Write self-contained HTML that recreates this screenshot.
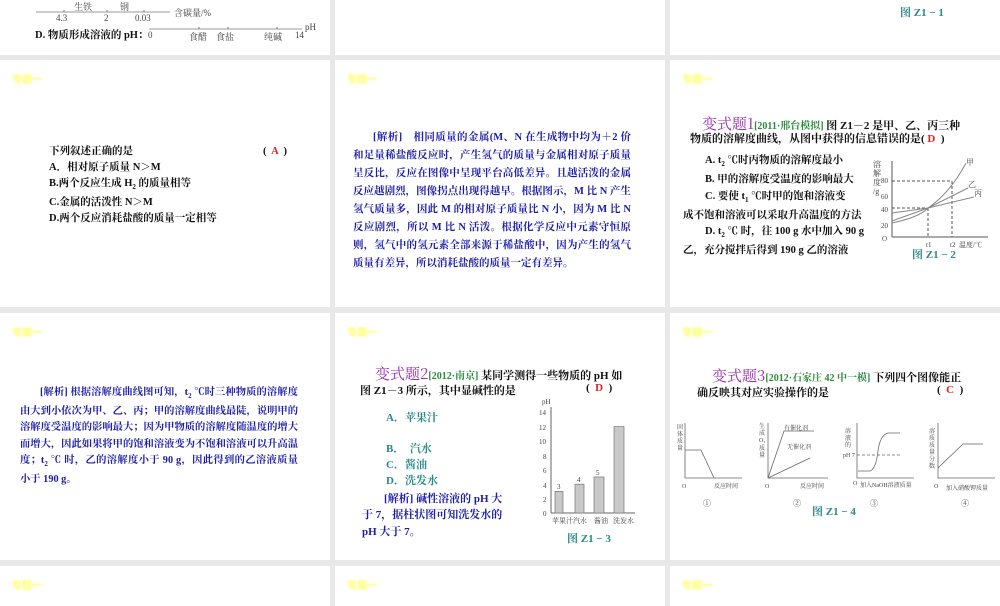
<!DOCTYPE html>
<html><head><meta charset="utf-8"><style>
*{margin:0;padding:0;box-sizing:border-box}
body{width:1000px;height:600px;background:#e8e8e8;position:relative;overflow:hidden;font-family:"Liberation Serif","Noto Serif CJK SC","Noto Sans CJK SC",serif;font-size:11px;color:#111}
.s{position:absolute;background:#fff;overflow:hidden}
.t{position:absolute;white-space:nowrap}
.zt{position:absolute;left:12px;top:11px;color:#ffff99;font-size:10px;font-weight:bold;font-family:"Noto Sans CJK SC",sans-serif;text-shadow:0 0 2px #ffff80}
.b{color:#1c1ca8;font-weight:bold}
.g{color:#2a8a3a;font-weight:bold;font-size:10px}
.p{color:#9a2ab0;font-size:15px;font-family:"Noto Serif CJK SC",serif}
.tl{color:#2a8a8a;font-weight:bold;font-size:11px}
.r{color:#d22;font-weight:bold}
.bk{font-weight:bold}
svg{position:absolute}
svg text{font-family:"Liberation Serif","Noto Serif CJK SC",serif}
</style></head><body>

<div class="s" style="left:0;top:0;width:330px;height:55px">
<svg width="330" height="55" style="left:0;top:0">
<line x1="36" y1="12" x2="170" y2="12" stroke="#777" stroke-width="0.8"/>
<line x1="64" y1="10" x2="64" y2="12" stroke="#777"/><line x1="107" y1="10" x2="107" y2="12" stroke="#777"/><line x1="144" y1="10" x2="144" y2="12" stroke="#777"/>
<text x="74" y="10" font-size="9" fill="#444">生铁</text><text x="120" y="10" font-size="9" fill="#444">钢</text>
<text x="56" y="21" font-size="9" fill="#444">4.3</text><text x="104" y="21" font-size="9" fill="#444">2</text><text x="135" y="21" font-size="9" fill="#444">0.03</text>
<text x="174" y="16" font-size="9" fill="#444">含碳量/%</text>
<line x1="149" y1="29" x2="302" y2="29" stroke="#777" stroke-width="0.8"/>
<line x1="199" y1="27" x2="199" y2="29" stroke="#777"/><line x1="228" y1="27" x2="228" y2="29" stroke="#777"/><line x1="277" y1="27" x2="277" y2="29" stroke="#777"/>
<text x="148" y="38" font-size="9" fill="#444">0</text><text x="189" y="40" font-size="9" fill="#444">食醋</text><text x="216" y="40" font-size="9" fill="#444">食盐</text><text x="264" y="40" font-size="9" fill="#444">纯碱</text><text x="295" y="38" font-size="9" fill="#444">14</text><text x="305" y="30" font-size="9" fill="#444">pH</text>
</svg>
<div class="t bk" style="left:35px;top:27px;font-size:10.5px">D. 物质形成溶液的 pH：</div>
</div>
<div class="s" style="left:335px;top:0;width:330px;height:55px"></div>
<div class="s" style="left:670px;top:0;width:330px;height:55px"><div class="t tl" style="left:230px;top:4px">图 Z1 − 1</div></div>

<div class="s" style="left:0;top:60px;width:330px;height:247px">
<div class="zt">专题一</div>
<div class="bk" style="position:absolute;left:49px;top:84px;line-height:16px;font-size:10.5px;width:260px">
<div style="position:relative">下列叙述正确的是<span style="position:absolute;left:214px;top:0">(&nbsp; <span class="r">A</span> &nbsp;)</span></div>
<div>A．相对原子质量 N＞M</div>
<div>B.两个反应生成 H<sub style="font-size:7px">2</sub> 的质量相等</div>
<div>C.金属的活泼性 N＞M</div>
<div>D.两个反应消耗盐酸的质量一定相等</div>
</div>
</div>
<div class="s" style="left:335px;top:60px;width:330px;height:247px">
<div class="zt">专题一</div>
<div class="b" style="position:absolute;left:18px;top:69px;width:278px;line-height:18px;text-align:justify;font-size:10.5px">
<div style="text-indent:20px">[解析]　相同质量的金属(M、N 在生成物中均为＋2 价和足量稀盐酸反应时，产生氢气的质量与金属相对原子质量呈反比，反应在图像中呈现平台高低差异。且越活泼的金属反应越剧烈，图像拐点出现得越早。根据图示，M 比 N 产生氢气质量多，因此 M 的相对原子质量比 N 小，因为 M 比 N 反应剧烈，所以 M 比 N 活泼。根据化学反应中元素守恒原则，氢气中的氢元素全部来源于稀盐酸中，因为产生的氢气质量有差异，所以消耗盐酸的质量一定有差异。</div>
</div>
</div>
<div class="s" style="left:670px;top:60px;width:330px;height:247px">
<div class="zt">专题一</div>
<div class="t" style="left:32px;top:53px"><span class="p">变式题1</span><span class="g">[2011·邢台模拟]</span><span class="bk"> 图 Z1－2 是甲、乙、丙三种</span></div>
<div class="t bk" style="left:20px;top:70px">物质的溶解度曲线，从图中获得的信息错误的是(&nbsp;<span class="r">D</span>&nbsp; )</div>
<div class="bk" style="position:absolute;left:13px;top:93px;line-height:16.2px;font-size:10.5px">
<div style="padding-left:22px">A. t<sub style="font-size:7px">2</sub> ℃时丙物质的溶解度最小</div>
<div style="padding-left:22px">B. 甲的溶解度受温度的影响最大</div>
<div style="padding-left:22px">C. 要使 t<sub style="font-size:7px">1</sub> ℃时甲的饱和溶液变</div>
<div>成不饱和溶液可以采取升高温度的方法</div>
<div style="padding-left:22px">D. t<sub style="font-size:7px">2</sub> ℃ 时，往 100 g 水中加入 90 g</div>
<div>乙，充分搅拌后得到 190 g 乙的溶液</div>
</div>
<svg width="120" height="110" style="left:200px;top:95px">
<line x1="22" y1="6" x2="22" y2="82" stroke="#555"/><line x1="22" y1="82" x2="118" y2="82" stroke="#555"/>
<text x="3" y="12" font-size="8" fill="#444">溶</text><text x="3" y="21" font-size="8" fill="#444">解</text><text x="3" y="30" font-size="8" fill="#444">度</text><text x="3" y="39" font-size="8" fill="#444">/g</text>
<text x="11" y="28" font-size="7" fill="#444">80</text><text x="11" y="44" font-size="7" fill="#444">60</text><text x="11" y="57" font-size="7" fill="#444">40</text><text x="11" y="73" font-size="7" fill="#444">20</text><text x="12" y="86" font-size="7" fill="#444">O</text>
<line x1="22" y1="26" x2="82" y2="26" stroke="#555" stroke-dasharray="3 2"/><line x1="22" y1="53" x2="58" y2="53" stroke="#555" stroke-dasharray="3 2"/>
<line x1="58" y1="53" x2="58" y2="82" stroke="#555" stroke-dasharray="3 2"/><line x1="82" y1="26" x2="82" y2="82" stroke="#555" stroke-dasharray="3 2"/>
<path d="M22 68 Q50 62 58 53 Q80 38 96 8" stroke="#888" fill="none"/>
<path d="M22 66 L58 53 L98 33" stroke="#888" fill="none"/>
<path d="M22 58 L58 53 L104 42" stroke="#888" fill="none"/>
<text x="96" y="10" font-size="8" fill="#444">甲</text><text x="98" y="32" font-size="8" fill="#444">乙</text><text x="104" y="41" font-size="8" fill="#444">丙</text>
<text x="56" y="92" font-size="7" fill="#444">t1</text><text x="80" y="92" font-size="7" fill="#444">t2</text><text x="89" y="92" font-size="7" fill="#444">温度/℃</text>
</svg>
<div class="t tl" style="left:242px;top:186px">图 Z1 − 2</div>
</div>

<div class="s" style="left:0;top:313px;width:330px;height:247px">
<div class="zt">专题一</div>
<div class="b" style="position:absolute;left:20px;top:72px;width:278px;line-height:16.2px;text-align:justify;font-size:10.3px">
<div style="text-indent:20px">[解析] 根据溶解度曲线图可知，t<sub style="font-size:7px">2</sub> ℃时三种物质的溶解度由大到小依次为甲、乙、丙；甲的溶解度曲线最陡，说明甲的溶解度受温度的影响最大；因为甲物质的溶解度随温度的增大而增大，因此如果将甲的饱和溶液变为不饱和溶液可以升高温度；t<sub style="font-size:7px">2</sub> ℃ 时，乙的溶解度小于 90 g，因此得到的乙溶液质量小于 190 g。</div>
</div>
</div>
<div class="s" style="left:335px;top:313px;width:330px;height:247px">
<div class="zt">专题一</div>
<div class="t" style="left:40px;top:50px"><span class="p">变式题2</span><span class="g">[2012·南京]</span><span class="bk"> 某同学测得一些物质的 pH 如</span></div>
<div class="t bk" style="left:25px;top:69px;width:260px">图 Z1－3 所示，其中显碱性的是<span style="position:absolute;left:226px;top:0">(&nbsp; <span class="r">D</span> &nbsp;)</span></div>
<div class="t" style="left:51px;top:96px;color:#2a8a8a;font-weight:bold">A．苹果汁</div>
<div class="t" style="left:51px;top:127px;color:#2a8a8a;font-weight:bold">B．&nbsp; 汽水</div>
<div class="t" style="left:51px;top:143px;color:#2a8a8a;font-weight:bold">C．酱油</div>
<div class="t" style="left:51px;top:159px;color:#2a8a8a;font-weight:bold">D．洗发水</div>
<div class="b" style="position:absolute;left:27px;top:178px;width:150px;line-height:16.3px">
<div style="text-indent:22px">[解析] 碱性溶液的 pH 大于 7，据柱状图可知洗发水的 pH 大于 7。</div>
</div>
<svg width="120" height="130" style="left:200px;top:82px">
<text x="7" y="9" font-size="7" fill="#444">pH</text>
<line x1="16" y1="12" x2="16" y2="118" stroke="#666"/><line x1="16" y1="118" x2="100" y2="118" stroke="#666"/>
<g font-size="7" fill="#444">
<text x="4" y="20">14</text><text x="4" y="35">12</text><text x="4" y="49">10</text><text x="8" y="64">8</text><text x="8" y="78">6</text><text x="8" y="93">4</text><text x="8" y="107">2</text><text x="8" y="121">0</text>
<text x="17" y="128">苹果汁</text><text x="38" y="128">汽水</text><text x="59" y="128">酱油</text><text x="78" y="128">洗发水</text>
<text x="22" y="94">3</text><text x="42" y="87">4</text><text x="61" y="80">5</text><text x="81" y="52">12</text></g>
<rect x="20" y="96.4" width="8" height="21.6" fill="#c8c8c8" stroke="#777" stroke-width=".7"/>
<rect x="40" y="89.2" width="9" height="28.8" fill="#c8c8c8" stroke="#777" stroke-width=".7"/>
<rect x="59" y="82" width="10" height="36" fill="#c8c8c8" stroke="#777" stroke-width=".7"/>
<rect x="79" y="31.6" width="10" height="86.4" fill="#c8c8c8" stroke="#777" stroke-width=".7"/>
</svg>
<div class="t tl" style="left:232px;top:217px">图 Z1 − 3</div>
</div>
<div class="s" style="left:670px;top:313px;width:330px;height:247px">
<div class="zt">专题一</div>
<div class="t" style="left:42px;top:52px"><span class="p">变式题3</span><span class="g">[2012·石家庄 42 中一模]</span><span class="bk"> 下列四个图像能正</span></div>
<div class="t bk" style="left:27px;top:71px;width:290px">确反映其对应实验操作的是<span style="position:absolute;left:240px;top:0">(&nbsp; <span class="r">C</span> &nbsp;)</span></div>
<svg width="330" height="110" style="left:0;top:100px" font-size="6">
<g stroke="#666" fill="none" stroke-width=".8">
<path d="M15 10 V65 H72"/><path d="M15 37 H31 L44 65"/>
<path d="M98 10 V65 H158"/><path d="M98 65 L114 18 H144"/><path d="M98 65 L140 45"/>
<path d="M187 10 V65 H244"/><path d="M188 58 H200 Q206 56 208 38 Q210 22 218 20 H230"/><path d="M187 42 H230" stroke-dasharray="3 2"/>
<path d="M268 10 V65 H325"/><path d="M268 55 L293 31 H313"/>
</g>
<g fill="#444">
<text x="7" y="16">固</text><text x="7" y="23">体</text><text x="7" y="30">质</text><text x="7" y="37">量</text>
<text x="89" y="15">生</text><text x="89" y="22">成</text><text x="89" y="29">O₂</text><text x="89" y="37">质</text><text x="89" y="44">量</text>
<text x="114" y="17">有催化剂</text><text x="117" y="36">无催化剂</text>
<text x="175" y="20">溶</text><text x="175" y="27">液</text><text x="175" y="34">的</text><text x="173" y="44">pH 7</text>
<text x="259" y="20">溶</text><text x="259" y="27">质</text><text x="259" y="34">质</text><text x="259" y="41">量</text><text x="259" y="48">分</text><text x="259" y="55">数</text>
<text x="12" y="75">O</text><text x="44" y="75">反应时间</text>
<text x="95" y="75">O</text><text x="130" y="75">反应时间</text>
<text x="183" y="72">O</text><text x="190" y="74">加入NaOH溶液质量</text>
<text x="264" y="75">O</text><text x="276" y="77">加入硝酸钾质量</text>
<text x="33" y="93" font-size="8">①</text><text x="123" y="93" font-size="8">②</text><text x="200" y="93" font-size="8">③</text><text x="291" y="93" font-size="8">④</text>
</g>
</svg>
<div class="t tl" style="left:142px;top:190px">图 Z1 − 4</div>
</div>

<div class="s" style="left:0;top:566px;width:330px;height:40px"><div class="zt">专题一</div></div>
<div class="s" style="left:335px;top:566px;width:330px;height:40px"><div class="zt">专题一</div></div>
<div class="s" style="left:670px;top:566px;width:330px;height:40px"><div class="zt">专题一</div></div>
</body></html>
